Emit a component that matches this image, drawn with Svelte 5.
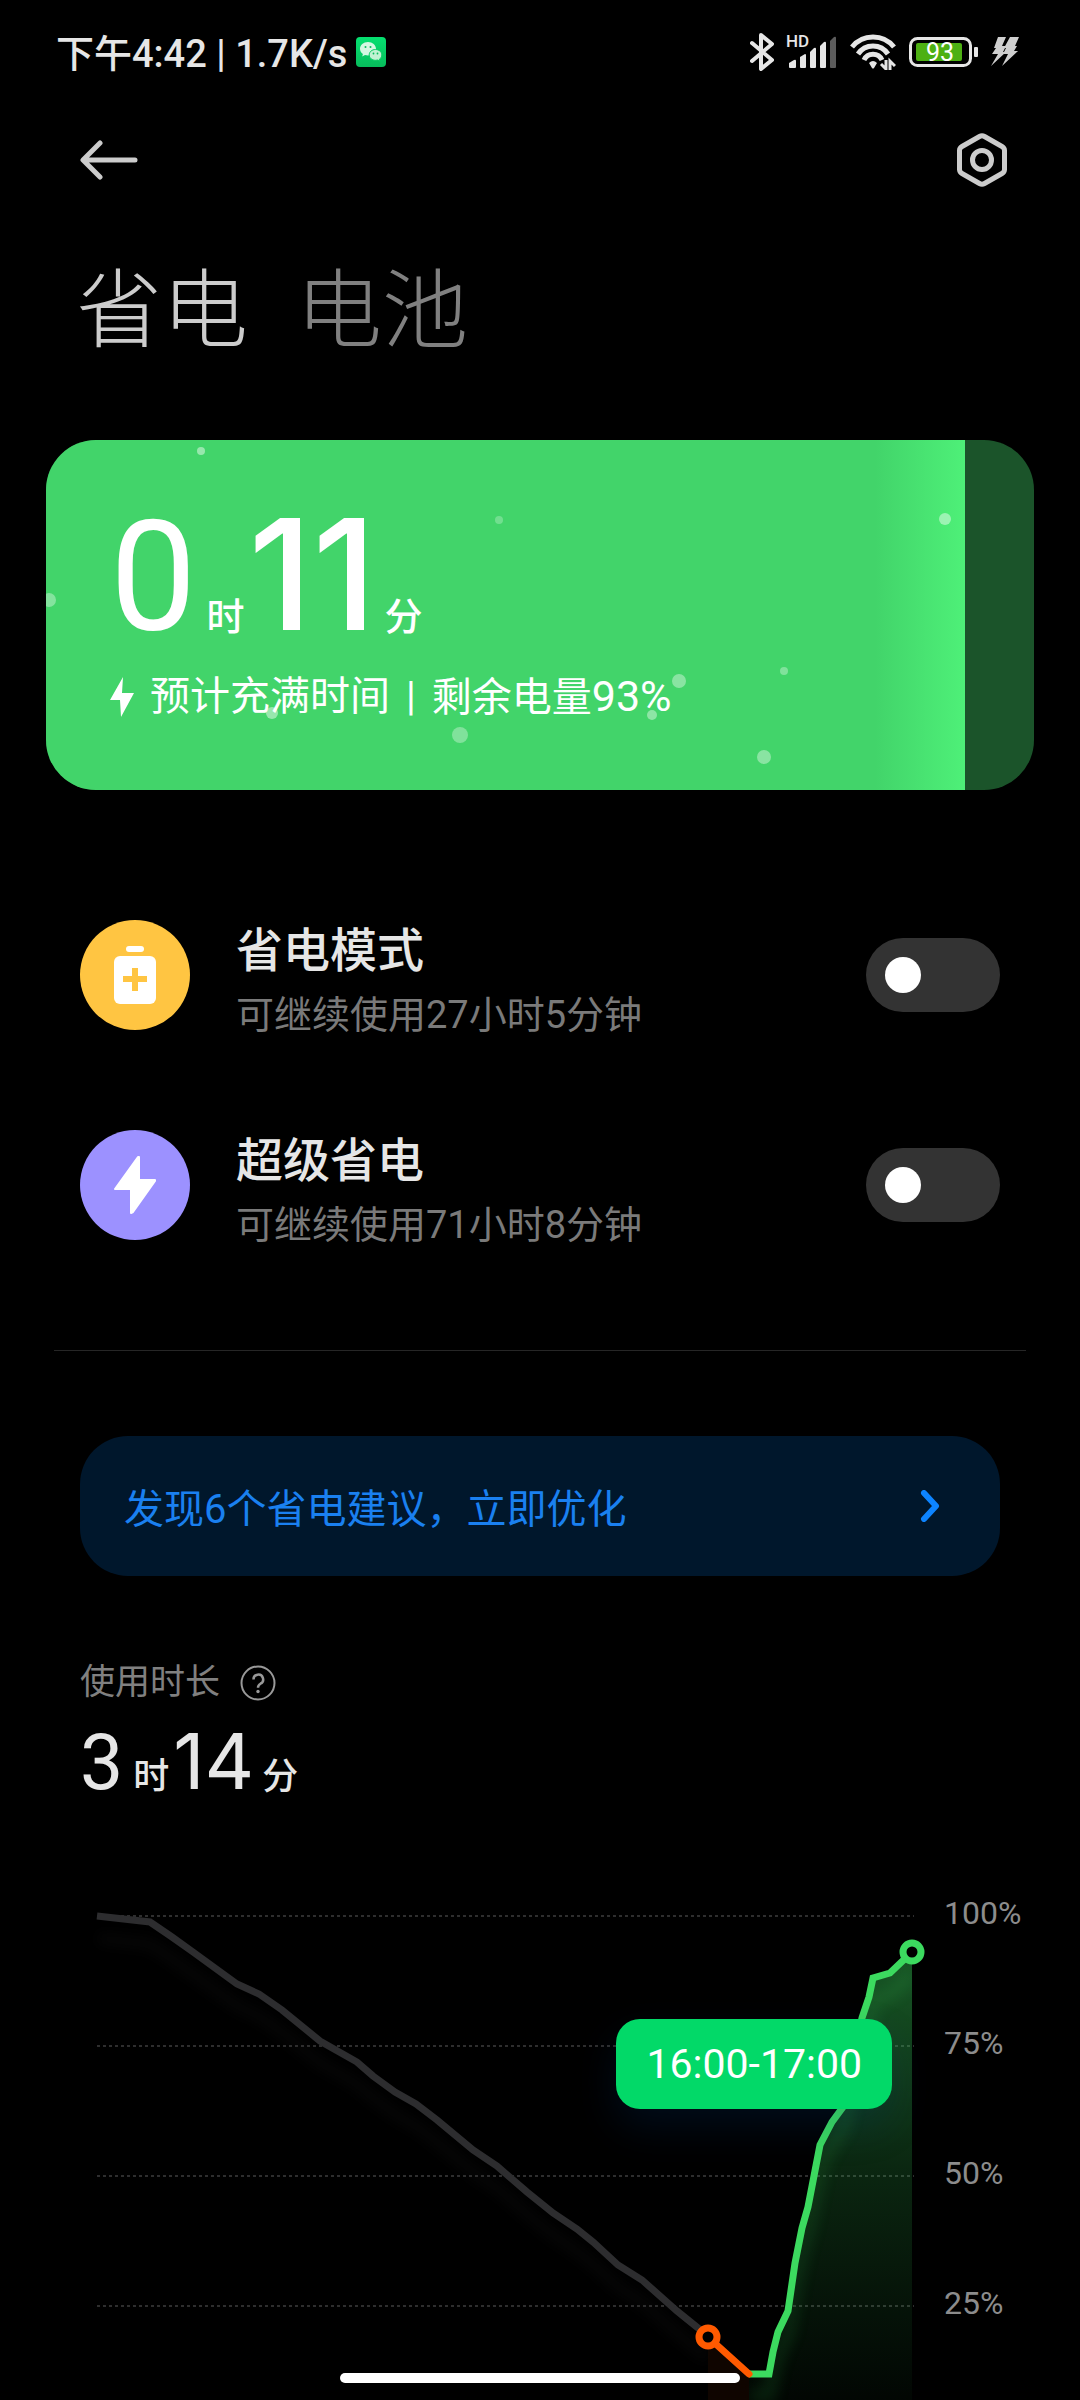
<script>
	const level = 93;

	const bubbles = [
		{ x: 155, y: 11, r: 4, o: 0.45 },
		{ x: 453, y: 80, r: 4, o: 0.25 },
		{ x: 3, y: 160, r: 7, o: 0.35 },
		{ x: 226, y: 273, r: 6, o: 0.45 },
		{ x: 414, y: 295, r: 8, o: 0.33 },
		{ x: 633, y: 241, r: 7, o: 0.38 },
		{ x: 606, y: 275, r: 5, o: 0.4 },
		{ x: 718, y: 317, r: 7, o: 0.38 },
		{ x: 738, y: 231, r: 4, o: 0.33 },
		{ x: 899, y: 79, r: 6, o: 0.45 }
	];

	let modes = $state([
		{ id: 'saver', title: '省电模式', note: '可继续使用27小时5分钟', on: false },
		{ id: 'ultra', title: '超级省电', note: '可继续使用71小时8分钟', on: false }
	]);

	const ticks = [100, 75, 50, 25];

	const idleLine =
		'17,26 70,32 92,47 113,62 157,94 179,104 202,120 240,151 277,172 293,186 315,202 336,214 357,230 393,260 417,276 447,302 473,323 497,339 513,352 538,375 562,390 597,421 618,438 628,447';
	const lowLine = '628,447 669,484';
	const chargeLine =
		'669,484 689,484 693,462 698,442 708,421 715,373 722,338 728,317 740,255 752,232 763,217 782,128 789,107 793,88 810,83 832,62';
</script>

<div class="screen">
	<div class="status">
		<span class="clock">下午4:42 | 1.7K/s</span>
		<svg class="wechat" width="30" height="30" viewBox="0 0 30 30">
			<defs>
				<linearGradient id="wx" x1="0" y1="0" x2="0" y2="1">
					<stop offset="0" stop-color="#05e070" />
					<stop offset="1" stop-color="#07bd5c" />
				</linearGradient>
			</defs>
			<rect width="30" height="30" rx="4" fill="url(#wx)" />
			<path
				d="M12 5c-4.600 0-8 3-8 6.800 0 2.200 1.100 4 2.900 5.200l-.7 2.400 2.800-1.400c1 .3 2 .4 3 .4 4.500 0 8-3 8-6.600S16.500 5 12 5z"
				fill="#d4f8e2"
			/>
			<path
				d="M19.500 12.500c-3.600 0-6.300 2.400-6.300 5.400s2.700 5.400 6.300 5.400c.8 0 1.600-.1 2.300-.3l2.200 1.200-.6-2c1.500-1 2.400-2.500 2.400-4.300 0-3-2.700-5.400-6.300-5.400z"
				fill="#c0f2d3"
				stroke="#07cc64"
			/>
			<circle cx="9.500" cy="10" r="1" fill="#07bd5c" />
			<circle cx="14.500" cy="10" r="1" fill="#07bd5c" />
			<circle cx="17.500" cy="16.500" r=".9" fill="#07bd5c" />
			<circle cx="21.500" cy="16.500" r=".9" fill="#07bd5c" />
		</svg>
		<div class="indicators">
			<svg width="24" height="38" viewBox="0 0 24 38">
				<path
					d="M2 10l20 17-11 9V2l11 9L2 28"
					fill="none"
					stroke="#e6e6e6"
					stroke-width="4"
					stroke-linecap="round"
					stroke-linejoin="round"
				/>
			</svg>
			<svg class="signal" width="50" height="34" viewBox="0 0 50 34">
				<text x="-1" y="12" class="hd">HD</text>
				<g fill="#e6e6e6">
					<path d="M2 28l5-3q2-1 2 1v6q0 1-1 1H3q-1 0-1-1z" />
					<path d="M13 22l5-3q1 0 1 1v12q0 1-1 1h-4q-1 0-1-1z" />
					<path d="M23 17l4-4q2-1 2 1v18q0 1-1 1h-4q-1 0-1-1z" />
					<path d="M33 11l4-4q2-1 2 1v24q0 1-1 1h-4q-1 0-1-1z" />
				</g>
				<path d="M43 6l4-4q2-1 2 1v29q0 1-1 1h-4q-1 0-1-1z" fill="#5c5c5c" />
			</svg>
			<svg width="46" height="36" viewBox="0 0 46 36">
				<g fill="none" stroke="#e6e6e6" stroke-width="5">
					<path d="M2 13a27 27 0 0 1 42 0" />
					<path d="M8 20a18 18 0 0 1 30 0" />
					<path d="M14 26a10 10 0 0 1 18 0" />
				</g>
				<path d="M19 29q4-4 8 0l-3 5q-1 1-2 0z" fill="#e6e6e6" />
				<path d="M36 26v9l-5-5M40 36v-9l5 5" fill="none" stroke="#e6e6e6" stroke-width="3" />
			</svg>
			<svg width="69" height="30" viewBox="0 0 69 30">
				<rect x="1.500" y="1.500" width="60" height="27" rx="7" fill="none" stroke="#e6e6e6" stroke-width="3" />
				<rect x="7" y="6" width="46" height="18" rx="2" fill="#4db013" />
				<rect x="65" y="10" width="4" height="10" rx="1" fill="#e6e6e6" />
				<text x="31" y="24" text-anchor="middle" class="level">{level}</text>
			</svg>
			<svg width="28" height="30" viewBox="0 0 28 30">
				<g fill="#cfcfcf">
					<path d="M7 0h8l-4 9h4l-3 6h3L0 29l7-12H1l4-6H3z" />
					<path d="M19 0h9l-4 9h2l-3 5h4L11 29l6-12h-5l3-6h-2z" />
				</g>
			</svg>
		</div>
	</div>

	<header class="bar">
		<button class="icon-btn" aria-label="返回">
			<svg width="58" height="40" viewBox="0 0 58 40">
				<path
					d="M20 3L3 20l17 17M4 20h51"
					fill="none"
					stroke="#ccc"
					stroke-width="5"
					stroke-linecap="round"
					stroke-linejoin="round"
				/>
			</svg>
		</button>
		<button class="icon-btn" aria-label="设置">
			<svg width="50" height="54" viewBox="0 0 50 54">
				<path
					d="M22.500 3.500q2.500-1.500 5 0l17.500 10q2.500 1.500 2.500 4v19q0 2.500-2.500 4l-17.500 10q-2.500 1.500-5 0L5 40.500q-2.500-1.500-2.500-4v-19q0-2.500 2.500-4z"
					fill="none"
					stroke="#ccc"
					stroke-width="5"
				/>
				<circle cx="25" cy="27" r="9.500" fill="none" stroke="#ccc" stroke-width="5" />
			</svg>
		</button>
	</header>

	<nav class="tabs">
		<a href="#saver" class="active" aria-current="page">省电</a>
		<a href="#battery">电池</a>
	</nav>

	<section class="hero">
		<div class="hero-fill" style="width: {level}%"></div>
		<svg class="bubbles" viewBox="0 0 988 350" preserveAspectRatio="none">
			{#each bubbles as b}
				<circle cx={b.x} cy={b.y} r={b.r} fill="#fff" opacity={b.o} />
			{/each}
		</svg>
		<div class="hero-body">
			<p class="remaining">
				<span class="num">0</span><span class="unit">时</span><span class="num">11</span><span
					class="unit">分</span
				>
			</p>
			<p class="hero-note">
				<svg width="24" height="40" viewBox="0 0 24 40">
					<path d="M13 0L0 23h10l1 17 13-24H12z" fill="#fff" />
				</svg>
				<span>预计充满时间</span>
				<span>|</span>
				<span>剩余电量<span class="percent">{level}%</span></span>
			</p>
		</div>
	</section>

	<section class="modes">
		{#each modes as mode (mode.id)}
			<div class="mode">
				<div class="badge {mode.id}">
					{#if mode.id === 'saver'}
						<svg width="42" height="58" viewBox="0 0 42 58">
							<rect x="12" y="0" width="18" height="6" rx="3" fill="#fff" />
							<rect x="0" y="10" width="42" height="48" rx="6" fill="#fff" />
							<path d="M18 22h6v8h9v6h-9v9h-6v-9H9v-6h9z" fill="#ffc542" />
						</svg>
					{:else}
						<svg width="42" height="58" viewBox="0 0 42 58">
							<path
								d="M24 1L1 33h16v24l2-1 22-31v-1H25V1z"
								fill="#fff"
								stroke="#fff"
								stroke-width="2"
								stroke-linejoin="round"
							/>
						</svg>
					{/if}
				</div>
				<label for={mode.id}>
					<span class="mode-title">{mode.title}</span>
					<span class="mode-note">{mode.note}</span>
				</label>
				<input id={mode.id} type="checkbox" role="switch" bind:checked={mode.on} />
			</div>
		{/each}
	</section>

	<hr />

	<button class="tip">
		<span>发现6个省电建议，立即优化</span>
		<svg width="20" height="32" viewBox="0 0 20 32">
			<path
				d="M4 3l12 13L4 29"
				fill="none"
				stroke="#0d84ff"
				stroke-width="6"
				stroke-linecap="round"
				stroke-linejoin="round"
			/>
		</svg>
	</button>

	<section class="usage">
		<h2>
			使用时长
			<svg width="36" height="36" viewBox="0 0 36 36">
				<circle cx="18" cy="18" r="16.500" fill="none" stroke="#999" stroke-width="2" />
				<path
					d="M13.500 14.500a4.800 4.800 0 1 1 7 4.200q-2.500 1.500-2.500 4"
					fill="none"
					stroke="#999"
					stroke-width="2.500"
				/>
				<circle cx="18" cy="26.500" r="1.700" fill="#999" />
			</svg>
		</h2>
		<p class="duration">
			<span class="num">3</span><span class="unit">时</span><span class="num">14</span><span
				class="unit">分</span
			>
		</p>
	</section>

	<section class="chart">
		<div class="plot">
			<svg viewBox="0 -42 850 552">
				<defs>
					<linearGradient id="chargeArea" x1="0" y1="62" x2="0" y2="510" gradientUnits="userSpaceOnUse">
						<stop offset="0" stop-color="#3cda5f" stop-opacity="0.4" />
						<stop offset="0.5" stop-color="#3cda5f" stop-opacity="0.17" />
						<stop offset="1" stop-color="#3cda5f" stop-opacity="0.03" />
					</linearGradient>
					<filter id="soft" x="-20%" y="-20%" width="140%" height="140%">
						<feGaussianBlur stdDeviation="7" />
					</filter>
					<clipPath id="underCharge">
						<polygon points="{chargeLine} 832,510 669,510" />
					</clipPath>
				</defs>
				{#each ticks as tick, i}
					<line x1="17" x2="834" y1={26 + i * 130} y2={26 + i * 130} class="grid" />
				{/each}
				<polyline points={idleLine} transform="translate(0 22)" class="glow" stroke="#2d2d2f" />
				<polygon points="{lowLine} 669,510 628,510" fill="#ff5a00" opacity="0.06" />
				<polygon points="{chargeLine} 832,510 669,510" fill="url(#chargeArea)" />
				<g clip-path="url(#underCharge)">
					<polyline points={chargeLine} transform="translate(0 22)" class="glow" stroke="#3cda5f" />
				</g>
				<polyline points={idleLine} class="line" stroke="#2d2d2f" />
				<polyline points={chargeLine} class="line" stroke="#3cda5f" />
				<polyline points={lowLine} class="line round" stroke="#ff5a00" />
				<circle cx="628" cy="447" r="9" class="dot" stroke="#ff5a00" />
				<circle cx="832" cy="62" r="9" class="dot" stroke="#3cda5f" />
			</svg>
			<div class="tooltip">16:00-17:00</div>
		</div>
		<ul class="ticks">
			{#each ticks as tick}
				<li>{tick}%</li>
			{/each}
		</ul>
	</section>

	<div class="home"></div>
</div>

<style>
	:global(body) {
		background: #000;
	}

	.screen {
		font-family: Roboto, 'Noto Sans CJK SC', sans-serif;
		color: #e6e6e6;
		background: #000;
		overflow: hidden;
	}

	svg {
		display: block;
		flex-shrink: 0;
	}

	p,
	h2,
	ul {
		margin: 0;
		padding: 0;
	}

	button {
		border: 0;
		padding: 0;
		background: none;
		font: inherit;
		cursor: pointer;
	}

	.status {
		display: flex;
		align-items: center;
		height: 104px;
		padding: 0 61px 0 56px;
	}

	.clock {
		padding-bottom: 4px;
		font-size: 38px;
		font-weight: 500;
	}

	.wechat {
		margin-left: 9px;
	}

	.indicators {
		display: flex;
		align-items: center;
		gap: 13px;
		margin-left: auto;
	}

	.signal {
		overflow: visible;
	}

	.hd {
		font-size: 17px;
		font-weight: 500;
		fill: #e6e6e6;
	}

	.level {
		font-size: 25px;
		fill: #fff;
	}

	.bar {
		display: flex;
		align-items: center;
		justify-content: space-between;
		height: 112px;
		padding: 0 73px 0 80px;
	}

	.tabs {
		display: flex;
		gap: 48px;
		padding: 30px 76px 0;
		font-size: 86px;
		line-height: 132px;
		font-weight: 200;
	}

	.tabs a {
		color: #808080;
		text-decoration: none;
	}

	.tabs .active {
		color: #ccc;
	}

	.hero {
		position: relative;
		height: 350px;
		margin: 62px 46px 0;
		border-radius: 50px;
		background: #1b542a;
		overflow: hidden;
	}

	.hero-fill {
		position: absolute;
		inset: 0 auto 0 0;
		background: linear-gradient(to left, #4ef078, #42d46a 90px);
	}

	.bubbles {
		position: absolute;
		inset: 0;
		width: 100%;
		height: 100%;
	}

	.hero-body {
		position: relative;
		padding: 54px 64px 0;
		color: #fff;
	}

	.remaining,
	.duration {
		display: flex;
		align-items: baseline;
	}

	.num {
		font-family: Inter, Roboto, sans-serif;
	}

	.num:first-child {
		margin-right: 6px;
		font-family: Roboto, sans-serif;
	}

	.unit {
		font-weight: 500;
		line-height: 1;
	}

	.remaining .num {
		font-size: 154px;
		line-height: 160px;
		font-weight: 500;
	}

	.remaining .num:first-child {
		font-weight: 400;
	}

	.remaining .unit {
		margin: 0 4px;
		font-size: 38px;
	}

	.hero-note {
		display: flex;
		align-items: center;
		gap: 16px;
		margin-top: 8px;
		font-size: 40px;
		line-height: 60px;
	}

	.percent {
		font-size: 43px;
	}

	.modes {
		display: grid;
		gap: 100px;
		padding: 130px 80px 0;
	}

	.mode {
		display: flex;
		align-items: center;
		height: 110px;
	}

	.badge {
		display: grid;
		place-items: center;
		width: 110px;
		height: 110px;
		border-radius: 50%;
	}

	.saver {
		background: #ffc542;
	}

	.ultra {
		background: #9c91ff;
	}

	label {
		flex: 1;
		margin-left: 46px;
		padding-top: 12px;
	}

	.mode-title,
	.mode-note {
		display: block;
	}

	.mode-title {
		font-size: 47px;
		line-height: 68px;
		font-weight: 500;
	}

	.mode-note {
		font-size: 38px;
		line-height: 60px;
		color: #7a7a7a;
	}

	input {
		appearance: none;
		width: 134px;
		height: 74px;
		margin: 0;
		padding: 19px;
		box-sizing: border-box;
		border-radius: 37px;
		background: #333;
	}

	input::before {
		content: '';
		display: block;
		width: 36px;
		height: 36px;
		border-radius: 50%;
		background: #fff;
	}

	input:checked {
		background: #0d84ff;
	}

	input:checked::before {
		margin-left: auto;
	}

	hr {
		height: 1px;
		margin: 110px 54px 0;
		border: 0;
		background: #262626;
	}

	.tip {
		display: flex;
		align-items: center;
		justify-content: space-between;
		width: calc(100% - 160px);
		height: 140px;
		margin: 85px 80px 0;
		padding: 0 60px 0 44px;
		border-radius: 48px;
		background: #00172c;
		color: #1a80f0;
		font-size: 40px;
	}

	.usage {
		padding: 77px 80px 0;
	}

	h2 {
		display: flex;
		align-items: center;
		gap: 20px;
		font-size: 35px;
		line-height: 60px;
		font-weight: 400;
		color: #808080;
	}

	.duration .num {
		font-size: 77px;
		line-height: 96px;
	}

	.duration .unit {
		margin: 0 4px;
		font-size: 36px;
	}

	.unit:last-child {
		padding-left: 4px;
	}

	.chart {
		display: grid;
		grid-template-columns: 1fr 136px;
		column-gap: 14px;
		padding: 37px 0 0 80px;
	}

	.plot {
		position: relative;
	}

	.plot svg {
		width: 100%;
	}

	.grid {
		stroke: #fff;
		stroke-opacity: 0.18;
		stroke-width: 2;
		stroke-dasharray: 3 3;
	}

	.line {
		fill: none;
		stroke-width: 7;
	}

	.round {
		stroke-linecap: round;
	}

	.glow {
		fill: none;
		stroke-width: 14;
		opacity: 0.12;
		filter: url(#soft);
	}

	.dot {
		fill: #000;
		stroke-width: 7;
	}

	.tooltip {
		position: absolute;
		top: 31%;
		right: 38px;
		padding: 0 30px;
		border-radius: 24px;
		background: #02d968;
		color: #fff;
		font-size: 41px;
		line-height: 90px;
		box-shadow: 0 18px 40px rgba(0, 60, 130, 0.2);
	}

	.ticks {
		list-style: none;
		font-size: 32px;
		line-height: 130px;
		color: #8c8c8c;
	}

	.home {
		position: fixed;
		left: 50%;
		bottom: 17px;
		width: 400px;
		height: 10px;
		border-radius: 5px;
		background: #fff;
		transform: translateX(-50%);
	}
</style>
